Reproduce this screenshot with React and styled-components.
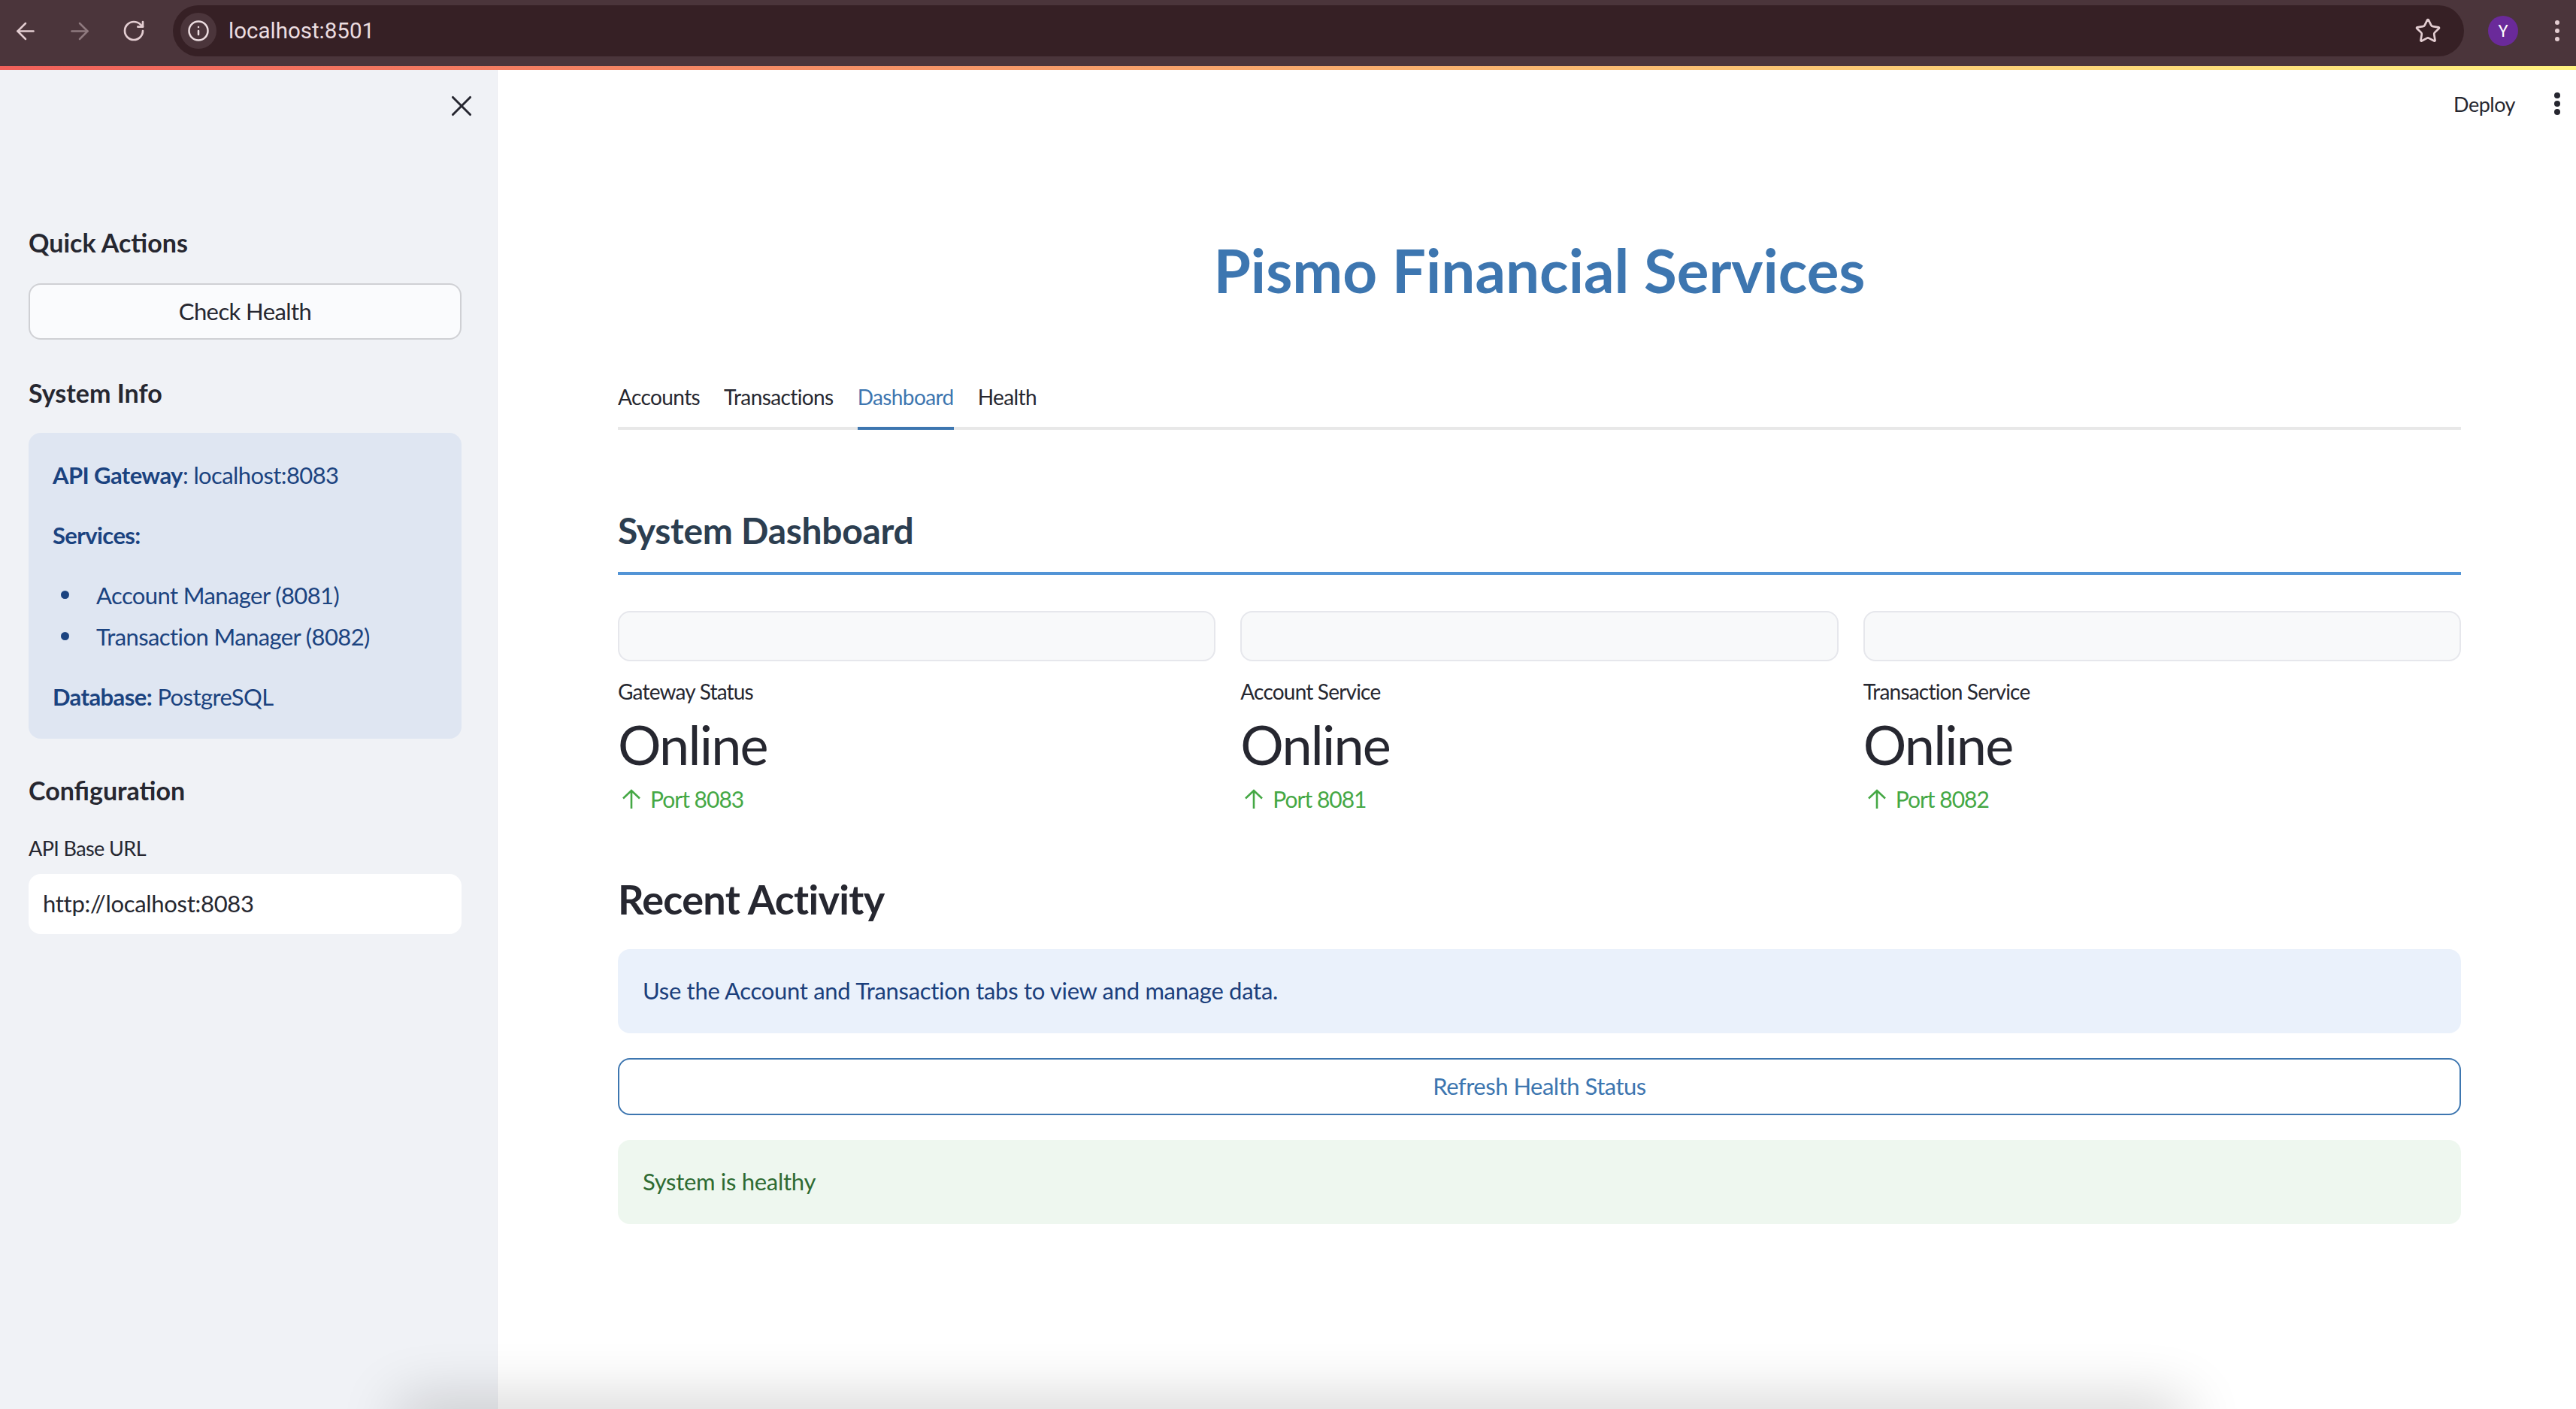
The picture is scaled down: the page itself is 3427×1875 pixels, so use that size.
import styled, { createGlobalStyle } from "styled-components";
import { ArrowLeft, ArrowRight, Info, RotateCw, Star, X } from "lucide-react";

const GlobalStyle = createGlobalStyle`
  html, body {
    margin: 0;
    height: 100%;
    overflow: hidden;
    background: #ffffff;
  }
  * {
    box-sizing: border-box;
  }
`;

const metrics = [
  { label: "Gateway Status", port: "Port 8083" },
  { label: "Account Service", port: "Port 8081" },
  { label: "Transaction Service", port: "Port 8082" },
];

const tabs = ["Accounts", "Transactions", "Dashboard", "Health"];

export default function App() {
  return (
    <Page>
      <GlobalStyle />
      <BrowserBar>
        <NavButton $dim={false}>
          <ArrowLeft size={41} strokeWidth={1.7} />
        </NavButton>
        <NavButton $dim>
          <ArrowRight size={41} strokeWidth={1.7} />
        </NavButton>
        <NavButton $dim={false}>
          <RotateCw size={32} strokeWidth={2} />
        </NavButton>
        <Omnibox>
          <InfoChip>
            <Info size={30} strokeWidth={2} />
          </InfoChip>
          <Url>localhost:8501</Url>
          <StarWrap>
            <Star size={36} strokeWidth={1.8} />
          </StarWrap>
        </Omnibox>
        <Avatar>Y</Avatar>
        <Kebab $size={6} $gap={5} $left={49} $color="#e3cdd1" />
      </BrowserBar>
      <Decoration />
      <Body>
        <Sidebar>
          <CloseRow>
            <X size={46} strokeWidth={1.6} color="#262730" />
          </CloseRow>
          <SideTitle $top={148}>Quick Actions</SideTitle>
          <GhostButton>Check Health</GhostButton>
          <SideTitle $top={49}>System Info</SideTitle>
          <InfoBox>
            <InfoLine>
              <strong>API Gateway</strong>: localhost:8083
            </InfoLine>
            <InfoLine>
              <strong>Services:</strong>
            </InfoLine>
            <ServiceList>
              <li>Account Manager (8081)</li>
              <li>Transaction Manager (8082)</li>
            </ServiceList>
            <InfoLine>
              <strong>Database:</strong> PostgreSQL
            </InfoLine>
          </InfoBox>
          <SideTitle $top={47}>Configuration</SideTitle>
          <FieldLabel>API Base URL</FieldLabel>
          <UrlInput>http://localhost:8083</UrlInput>
        </Sidebar>
        <Main>
          <Toolbar>
            <DeployLabel>Deploy</DeployLabel>
            <Kebab $size={8} $gap={3} $left={52} $color="#262730" />
          </Toolbar>
          <Content>
            <PageTitle>Pismo Financial Services</PageTitle>
            <TabBar>
              {tabs.map((tab) => (
                <Tab key={tab} $active={tab === "Dashboard"}>
                  {tab}
                </Tab>
              ))}
            </TabBar>
            <SectionTitle>System Dashboard</SectionTitle>
            <MetricGrid>
              {metrics.map((metric) => (
                <Metric key={metric.label}>
                  <MetricBox />
                  <MetricLabel>{metric.label}</MetricLabel>
                  <MetricValue>Online</MetricValue>
                  <MetricDelta>
                    <svg width="26" height="26" viewBox="0 0 26 26" fill="none" stroke="currentColor" strokeWidth="2.6">
                      <path d="M13 26V2M2 12.5 13 2l11 10.5" />
                    </svg>
                    {metric.port}
                  </MetricDelta>
                </Metric>
              ))}
            </MetricGrid>
            <SubTitle>Recent Activity</SubTitle>
            <Alert $bg="#eaf1fb" $color="#1b3f7c">
              Use the Account and Transaction tabs to view and manage data.
            </Alert>
            <RefreshButton>Refresh Health Status</RefreshButton>
            <Alert $bg="#eef7ef" $color="#2e6b32">
              System is healthy
            </Alert>
          </Content>
        </Main>
      </Body>
      <WindowShadow />
    </Page>
  );
}

const Page = styled.div`
  position: relative;
  display: flex;
  flex-direction: column;
  height: 100vh;
  overflow: hidden;
  font-family: "Lato", "Noto Sans", sans-serif;
  color: #262730;
`;

const BrowserBar = styled.div`
  display: flex;
  align-items: center;
  height: 88px;
  flex-shrink: 0;
  padding: 0 0 6px 16px;
  background: #4b353b;
`;

const NavButton = styled.div`
  display: flex;
  justify-content: center;
  width: 36px;
  margin-right: 36px;
  color: ${(p) => (p.$dim ? "#8f7a7f" : "#e3cdd1")};
`;

const Omnibox = styled.div`
  display: flex;
  align-items: center;
  width: 3048px;
  height: 68px;
  margin-left: -2px;
  padding: 0 30px 0 10px;
  border-radius: 34px;
  background: #362025;
`;

const InfoChip = styled.div`
  display: flex;
  align-items: center;
  justify-content: center;
  width: 48px;
  height: 48px;
  border-radius: 50%;
  background: #4b353b;
  color: #ecdde0;
`;

const Url = styled.div`
  margin-left: 16px;
  font-family: "Roboto", sans-serif;
  font-size: 29.5px;
  color: #ecdde0;
`;

const StarWrap = styled.div`
  display: flex;
  margin-left: auto;
  color: #e3cdd1;
`;

const Avatar = styled.div`
  display: flex;
  align-items: center;
  justify-content: center;
  width: 40px;
  height: 40px;
  margin-left: 32px;
  border-radius: 50%;
  background: #6a2a9a;
  color: #ffffff;
  font-family: "Roboto", sans-serif;
  font-size: 22px;
`;

const Kebab = styled.div`
  width: ${(p) => p.$size}px;
  height: ${(p) => p.$size}px;
  margin-left: ${(p) => p.$left}px;
  border-radius: 50%;
  background: ${(p) => p.$color};
  box-shadow:
    0 ${(p) => -(p.$size + p.$gap)}px 0 ${(p) => p.$color},
    0 ${(p) => p.$size + p.$gap}px 0 ${(p) => p.$color};
`;

const Decoration = styled.div`
  height: 5px;
  flex-shrink: 0;
  background: linear-gradient(90deg, #f0605a, #fff280);
`;

const Body = styled.div`
  display: flex;
  flex: 1;
  min-height: 0;
`;

const Sidebar = styled.aside`
  width: 662px;
  flex-shrink: 0;
  padding: 36px 47px 0 38px;
  background: #f0f2f6;
  border-right: 1px solid #e8eaf0;
`;

const CloseRow = styled.div`
  display: flex;
  justify-content: flex-end;
  align-items: center;
  height: 24px;
  margin-right: -23px;
`;

const SideTitle = styled.h3`
  margin: ${(p) => p.$top}px 0 0;
  font-size: 34px;
  line-height: 44px;
  font-weight: 700;
`;

const GhostButton = styled.div`
  display: flex;
  align-items: center;
  justify-content: center;
  height: 75px;
  margin-top: 32px;
  padding-bottom: 2px;
  border: 2px solid #cfd0d4;
  border-radius: 16px;
  background: #fafbfd;
  font-size: 31px;
  letter-spacing: -0.6px;
`;

const InfoBox = styled.div`
  display: flex;
  flex-direction: column;
  gap: 30px;
  margin-top: 31px;
  padding: 31px 32px;
  border-radius: 16px;
  background: #dfe6f2;
  color: #1b4380;
  font-size: 31px;
  letter-spacing: -0.6px;
  line-height: 50px;
`;

const InfoLine = styled.div`
  strong {
    font-weight: 700;
  }
`;

const ServiceList = styled.ul`
  display: flex;
  flex-direction: column;
  gap: 5px;
  margin: 0;
  padding-left: 58px;
  list-style: none;

  li {
    position: relative;
  }

  li::before {
    content: "";
    position: absolute;
    left: -47px;
    top: 19px;
    width: 11px;
    height: 11px;
    border-radius: 50%;
    background: #1b4380;
  }
`;

const FieldLabel = styled.div`
  margin-top: 37px;
  font-size: 27px;
  letter-spacing: -0.6px;
  line-height: 36px;
`;

const UrlInput = styled.div`
  display: flex;
  align-items: center;
  height: 80px;
  margin-top: 16px;
  padding: 0 0 2px 19px;
  border-radius: 16px;
  background: #ffffff;
  font-size: 31px;
  letter-spacing: -0.3px;
`;

const Main = styled.main`
  flex: 1;
  min-width: 0;
`;

const Toolbar = styled.div`
  display: flex;
  align-items: center;
  justify-content: flex-end;
  height: 90px;
  padding-right: 21px;
`;

const DeployLabel = styled.div`
  font-size: 27px;
  letter-spacing: -0.5px;
`;

const Content = styled.div`
  padding: 0 153px 0 160px;
`;

const PageTitle = styled.h1`
  margin: 126px 0 0;
  text-align: center;
  font-size: 80px;
  line-height: 100px;
  font-weight: 700;
  color: #3d76b0;
`;

const TabBar = styled.div`
  display: flex;
  gap: 32px;
  height: 88px;
  margin-top: 75px;
  border-bottom: 4px solid #e8e8e8;
`;

const Tab = styled.div`
  height: 88px;
  padding-top: 24px;
  line-height: 40px;
  font-size: 28px;
  letter-spacing: -0.6px;
  border-bottom: 4px solid ${(p) => (p.$active ? "#3d76b0" : "transparent")};
  color: ${(p) => (p.$active ? "#3d76b0" : "#262730")};
`;

const SectionTitle = styled.h2`
  margin: 104px 0 0;
  padding-bottom: 25px;
  border-bottom: 4px solid #5294d6;
  font-size: 48px;
  letter-spacing: -0.3px;
  line-height: 60px;
  font-weight: 700;
  color: #2c3e50;
`;

const MetricGrid = styled.div`
  display: grid;
  grid-template-columns: repeat(3, 1fr);
  gap: 33px;
  margin-top: 48px;
`;

const Metric = styled.div`
  min-width: 0;
`;

const MetricBox = styled.div`
  height: 67px;
  border: 2px solid #e6e7ec;
  border-radius: 16px;
  background: #f8f9fa;
`;

const MetricLabel = styled.div`
  margin-top: 22px;
  font-size: 28px;
  letter-spacing: -0.8px;
  line-height: 36px;
`;

const MetricValue = styled.div`
  margin-top: 7px;
  font-size: 72px;
  letter-spacing: -1.8px;
  line-height: 90px;
`;

const MetricDelta = styled.div`
  display: flex;
  align-items: center;
  gap: 12px;
  height: 40px;
  margin-top: 8px;
  padding-left: 5px;
  font-size: 30px;
  letter-spacing: -1px;
  color: #45a845;
`;

const SubTitle = styled.h3`
  margin: 79px 0 0;
  font-size: 54px;
  letter-spacing: -0.7px;
  line-height: 70px;
  font-weight: 700;
`;

const Alert = styled.div`
  display: flex;
  align-items: center;
  height: 112px;
  margin-top: 31px;
  padding: 0 0 2px 33px;
  border-radius: 16px;
  background: ${(p) => p.$bg};
  color: ${(p) => p.$color};
  font-size: 31px;
  letter-spacing: -0.3px;
`;

const RefreshButton = styled.div`
  display: flex;
  align-items: center;
  justify-content: center;
  height: 76px;
  margin: 33px 0;
  padding-bottom: 2px;
  border: 2px solid #3d76b0;
  border-radius: 16px;
  color: #3d76b0;
  font-size: 31px;
  letter-spacing: -0.5px;

  & + div {
    margin-top: 33px;
  }
`;

const WindowShadow = styled.div`
  position: absolute;
  left: 540px;
  right: 530px;
  bottom: -40px;
  height: 40px;
  box-shadow: 0 0 80px 10px rgba(0, 0, 0, 0.2);
  pointer-events: none;
`;
